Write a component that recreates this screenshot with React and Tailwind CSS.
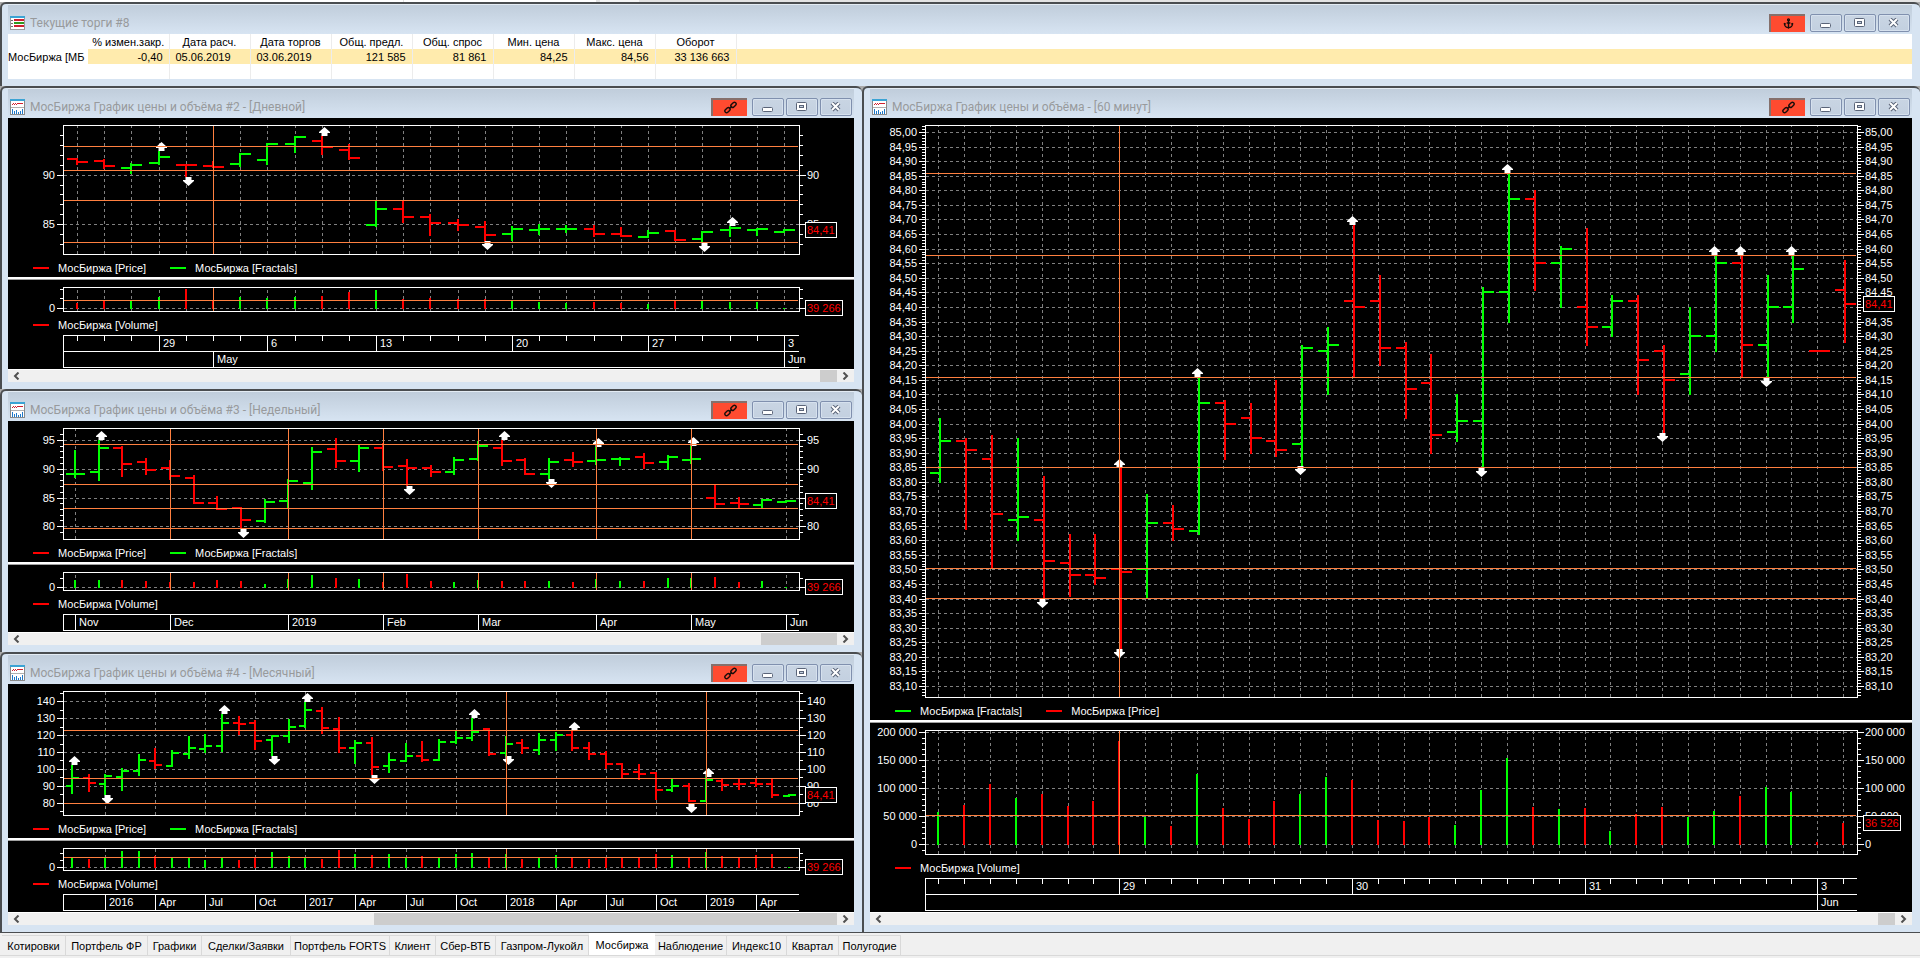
import { Anchor } from 'lucide-react'

const GREEN = '#00ff00'
const RED = '#ff0000'
const LEVEL = '#ff8040'
const GRID = '#808080'

const PLOT_LEFT = 55

const range = (from, to, step = 1) => {
  const out = []
  for (let v = from; v <= to; v += step) out.push(v)
  return out
}

// bars: [open, high, low, close, rising] as plot heights, volumes: bar tops
const DAILY = {
  title: 'МосБиржа График цены и объёма #2 - [Дневной]',
  width: 846,
  right: 791,
  x0: 69,
  step: 27.19,
  barShift: 0,
  arrowShift: 2.5,
  tick: [10, 11],
  dashed: range(0, 26),
  levelsX: [5],
  legend: [['МосБиржа [Price]', 'red'], ['МосБиржа [Fractals]', 'green']],
  thumb: 'w-[17px]',
  price: {
    height: 141,
    bottom: 136,
    majors: [[57, '90'], [106, '85']],
    minors: [17, 27, 37, 47, 67, 76, 86, 96, 116, 126],
    levels: [28, 52, 82, 124],
    badge: [104, '84,41', 32],
    bars: [
      [41, 40, 47, 44, 0], [43, 41, 51, 48, 0], [50, 45, 56, 47, 1], [45, 33, 47, 39, 1], [47, 46, 59, 47, 0],
      [48, 43, 50, 49, 0], [46, 35, 49, 36, 1], [42, 25, 47, 26, 1], [26, 18, 35, 19, 1], [23, 18, 37, 29, 0],
      [32, 26, 42, 40, 0], [107, 83, 109, 91, 1], [91, 82, 105, 99, 0], [99, 96, 118, 105, 0], [105, 101, 113, 107, 0],
      [109, 103, 123, 117, 0], [116, 108, 123, 111, 1], [112, 106, 117, 111, 1], [111, 107, 115, 111, 1], [111, 107, 119, 116, 0],
      [116, 109, 118, 118, 0], [119, 112, 120, 115, 1], [113, 112, 123, 122, 0], [121, 113, 124, 114, 1], [112, 108, 119, 110, 1],
      [112, 110, 118, 111, 1], [114, 111, 115, 112, 1]
    ],
    ups: [[3, 24], [9, 9], [24, 99]],
    downs: [[4, 59], [15, 123], [23, 125]]
  },
  volume: {
    height: 36,
    bottom: 31,
    base: 29,
    majors: [[28, '0']],
    minors: [9, 18],
    levels: [20],
    badge: [20, '39 266', 38],
    tops: [23, 21, 21, 17, 9, 21, 17, 18, 17, 16, 12, 10, 19, 18, 19, 19, 21, 22, 23, 22, 23, 24, 21, 21, 22, 22, 28]
  },
  axis: {
    ticks: range(0, 26),
    rows: [[[3, '29'], [7, '6'], [11, '13'], [16, '20'], [21, '27'], [26, '3']], [[5, 'May'], [26, 'Jun']]]
  }
}

const WEEKLY = {
  title: 'МосБиржа График цены и объёма #3 - [Недельный]',
  width: 846,
  right: 791,
  x0: 67,
  step: 23.7,
  barShift: 0,
  arrowShift: 2.5,
  tick: [9, 10],
  dashed: [0, 30],
  levelsX: [4, 9, 13, 17, 22, 26],
  legend: [['МосБиржа [Price]', 'red'], ['МосБиржа [Fractals]', 'green']],
  thumb: 'w-[76px]',
  price: {
    height: 123,
    bottom: 118,
    majors: [[19, '95'], [48, '90'], [77, '85'], [105, '80']],
    minors: [13, 25, 30, 36, 42, 53, 59, 65, 71, 82, 88, 94, 99, 111],
    levels: [23, 63, 87, 107],
    badge: [72, '84,41', 32],
    bars: [
      [53, 29, 57, 53, 1], [51, 19, 60, 27, 1], [27, 25, 56, 43, 0], [41, 37, 54, 49, 0], [47, 39, 59, 55, 0],
      [57, 54, 83, 82, 0], [82, 75, 89, 88, 0], [87, 86, 107, 99, 0], [100, 78, 102, 81, 1], [80, 58, 87, 60, 1],
      [62, 26, 69, 31, 1], [28, 17, 47, 40, 0], [40, 24, 51, 27, 1], [27, 22, 50, 46, 0], [45, 38, 65, 47, 0],
      [47, 44, 56, 51, 0], [51, 36, 54, 39, 1], [38, 20, 40, 25, 1], [27, 19, 45, 40, 0], [39, 37, 54, 53, 0],
      [53, 37, 58, 41, 1], [39, 31, 46, 41, 0], [40, 26, 44, 39, 1], [38, 36, 45, 38, 1], [36, 32, 48, 42, 0],
      [41, 34, 49, 36, 1], [39, 25, 43, 38, 1], [77, 63, 87, 83, 0], [82, 76, 87, 83, 0], [84, 78, 87, 79, 1],
      [81, 79, 82, 80, 1]
    ],
    ups: [[1, 10], [18, 10], [22, 17], [26, 16]],
    downs: [[7, 108], [14, 65], [20, 58]]
  },
  volume: {
    height: 30,
    bottom: 25,
    base: 23,
    majors: [[22, '0']],
    minors: [13],
    levels: [],
    badge: [14, '39 266', 38],
    tops: [15, 15, 15, 16, 17, 17, 15, 16, 19, 14, 10, 13, 14, 17, 9, 16, 17, 15, 16, 16, 16, 17, 14, 16, 16, 13, 13, 12, 17, 16, 22]
  },
  axis: {
    ticks: [],
    rows: [[[0, 'Nov'], [4, 'Dec'], [9, '2019'], [13, 'Feb'], [17, 'Mar'], [22, 'Apr'], [26, 'May'], [30, 'Jun']]]
  }
}

const MONTHLY = {
  title: 'МосБиржа График цены и объёма #4 - [Месячный]',
  width: 846,
  right: 791,
  x0: 63.9,
  step: 16.68,
  barShift: 0,
  arrowShift: 2.5,
  tick: [6, 7],
  dashed: [2, 5, 8, 11, 14, 17, 20, 23, 29, 32, 35, 41],
  levelsX: [26, 38],
  legend: [['МосБиржа [Price]', 'red'], ['МосБиржа [Fractals]', 'green']],
  thumb: 'w-[57%]',
  price: {
    height: 136,
    bottom: 131,
    majors: [[17, '140'], [34, '130'], [51, '120'], [68, '110'], [85, '100'], [102, '90'], [119, '80']],
    minors: [9, 26, 43, 60, 76, 93, 110, 127],
    levels: [46, 94, 119],
    badge: [103, '84,41', 32],
    bars: [
      [102, 81, 110, 94, 1], [94, 90, 108, 99, 0], [100, 90, 111, 92, 1], [93, 84, 107, 87, 1], [87, 70, 92, 76, 1],
      [77, 64, 85, 81, 0], [82, 66, 83, 69, 1], [70, 52, 75, 64, 1], [65, 50, 69, 62, 1], [62, 30, 68, 39, 1],
      [39, 32, 51, 40, 0], [39, 36, 66, 57, 0], [56, 52, 72, 52, 1], [52, 35, 59, 43, 1], [42, 18, 44, 26, 1],
      [27, 23, 50, 44, 0], [45, 33, 69, 64, 0], [64, 56, 80, 59, 1], [59, 53, 91, 83, 0], [82, 69, 89, 76, 1],
      [77, 59, 77, 72, 1], [72, 57, 78, 76, 0], [76, 55, 76, 58, 1], [58, 47, 60, 54, 1], [54, 34, 57, 48, 1],
      [45, 44, 72, 70, 0], [69, 52, 72, 60, 1], [59, 55, 70, 64, 0], [66, 49, 71, 56, 1], [56, 48, 67, 51, 1],
      [51, 46, 67, 64, 0], [64, 58, 76, 70, 0], [70, 67, 85, 80, 0], [80, 79, 94, 90, 0], [88, 80, 96, 90, 0],
      [89, 88, 116, 106, 0], [106, 95, 108, 102, 1], [102, 99, 118, 117, 0], [117, 93, 118, 96, 1], [97, 95, 107, 101, 0],
      [100, 95, 106, 100, 0], [99, 95, 103, 100, 0], [100, 95, 114, 111, 0], [112, 111, 112, 111, 1]
    ],
    ups: [[0, 72], [9, 21], [14, 9], [24, 25], [30, 38], [38, 84]],
    downs: [[2, 111], [12, 72], [18, 91], [26, 72], [37, 120]]
  },
  volume: {
    height: 34,
    bottom: 29,
    base: 27,
    majors: [[26, '0']],
    minors: [12, 19],
    levels: [16],
    badge: [18, '39 266', 38],
    tops: [
      16, 18, 16, 10, 10, 15, 16, 17, 19, 16, 19, 16, 11, 15, 16, 18, 9, 13, 14, 13, 16, 15,
      16, 13, 12, 16, 13, 18, 16, 14, 16, 18, 17, 16, 17, 13, 14, 16, 11, 15, 16, 14, 13, 26
    ]
  },
  axis: {
    ticks: [],
    rows: [[
      [2, '2016'], [5, 'Apr'], [8, 'Jul'], [11, 'Oct'], [14, '2017'], [17, 'Apr'], [20, 'Jul'],
      [23, 'Oct'], [26, '2018'], [29, 'Apr'], [32, 'Jul'], [35, 'Oct'], [38, '2019'], [41, 'Apr']
    ]]
  }
}

const HOURLY = {
  title: 'МосБиржа График цены и объёма - [60 минут]',
  width: 1042,
  right: 987,
  x0: 68.3,
  step: 25.85,
  barShift: 2,
  arrowShift: 0.5,
  tick: [10, 11],
  dashed: range(0, 35),
  levelsX: [7],
  legend: [['МосБиржа [Fractals]', 'green'], ['МосБиржа [Price]', 'red']],
  thumb: 'w-[17px]',
  price: {
    height: 584,
    bottom: 579,
    majors: range(0, 38).map(i => [Math.round(14 + i * 14.579), ((8500 - i * 5) / 100).toFixed(2).replace('.', ',')]),
    minors: range(-2, 193).map(i => Math.round(14 + i * 2.916)),
    levels: [55, 137, 259, 349, 450, 480],
    badge: [178, '84,41', 32],
    bars: [
      [355, 300, 365, 323, 1], [323, 320, 412, 332, 0], [341, 317, 451, 396, 0], [402, 320, 423, 399, 1], [402, 358, 480, 443, 0],
      [445, 416, 479, 457, 0], [457, 416, 467, 460, 0], [451, 349, 531, 454, 0], [451, 376, 480, 405, 1], [405, 387, 423, 411, 0],
      [413, 260, 417, 285, 1], [285, 282, 342, 306, 0], [300, 285, 336, 320, 0], [323, 262, 339, 332, 0], [326, 227, 348, 230, 1],
      [233, 209, 277, 227, 1], [183, 107, 259, 189, 0], [183, 157, 248, 230, 0], [230, 224, 301, 271, 0], [265, 236, 336, 317, 0],
      [314, 276, 324, 303, 1], [303, 169, 349, 174, 1], [174, 55, 205, 81, 1], [81, 72, 173, 145, 0], [145, 128, 190, 131, 1],
      [189, 110, 228, 209, 0], [209, 177, 219, 183, 1], [183, 177, 277, 242, 0], [233, 227, 315, 262, 0], [256, 189, 277, 218, 1],
      [218, 138, 234, 145, 1], [145, 137, 259, 227, 0], [227, 157, 259, 189, 1], [189, 138, 205, 151, 1], [233, 232, 234, 233, 0],
      [172, 142, 225, 186, 0]
    ],
    ups: [[7, 341], [10, 250], [16, 98], [22, 46], [30, 128], [31, 128], [33, 128]],
    downs: [[4, 481], [7, 531], [14, 348], [21, 350], [28, 315], [32, 260]]
  },
  volume: {
    height: 136,
    bottom: 131,
    base: 122,
    majors: [[9, '200 000'], [37, '150 000'], [65, '100 000'], [93, '50 000'], [121, '0']],
    minors: range(1, 21).map(i => Math.round(9 + i * 5.6)),
    levels: [92],
    badge: [92, '36 526', 38],
    tops: [
      89, 82, 61, 75, 71, 83, 78, 18, 94, 103, 51, 85, 96, 78, 71, 54, 57, 97,
      98, 94, 102, 67, 35, 84, 86, 85, 108, 91, 84, 94, 88, 73, 64, 69, 119, 100
    ]
  },
  axis: {
    ticks: range(0, 35),
    rows: [[[7, '29'], [16, '30'], [25, '31'], [34, '3']], [[34, 'Jun']]]
  }
}

const COLUMNS = [
  { name: '% измен.закр.', value: '-0,40', align: 'text-right' },
  { name: 'Дата расч.', value: '05.06.2019', align: 'text-left' },
  { name: 'Дата торгов', value: '03.06.2019', align: 'text-left' },
  { name: 'Общ. предл.', value: '121 585', align: 'text-right' },
  { name: 'Общ. спрос', value: '81 861', align: 'text-right' },
  { name: 'Мин. цена', value: '84,25', align: 'text-right' },
  { name: 'Макс. цена', value: '84,56', align: 'text-right' },
  { name: 'Оборот', value: '33 136 663', align: 'text-right' }
]

const TABS = [
  ['Котировки', 'w-16'],
  ['Портфель ФР', 'w-[82px]'],
  ['Графики', 'w-[54px]'],
  ['Сделки/Заявки', 'w-[89px]'],
  ['Портфель FORTS', 'w-[99px]'],
  ['Клиент', 'w-[46px]'],
  ['Сбер-ВТБ', 'w-[60px]'],
  ['Газпром-Лукойл', 'w-[93px]'],
  ['Мосбиржа', 'w-[66px]'],
  ['Наблюдение', 'w-[72px]'],
  ['Индекс10', 'w-[60px]'],
  ['Квартал', 'w-[52px]'],
  ['Полугодие', 'w-[62px]']
]

function ChartIcon() {
  return (
    <svg width="15" height="16" viewBox="0 0 15 16" shapeRendering="crispEdges" className="shrink-0">
      <rect x="0" y="0" width="15" height="16" fill="#8a8a8a" />
      <rect x="1" y="2" width="13" height="13" fill="#ffffff" />
      <rect x="0" y="0" width="15" height="2" fill="#3ba3d4" />
      <path d="M2 5h1v-1h1v1h1v-1h1v1h1v-1h6v1h-6v1h-1v-1h-1v1h-1v-1h-1v1h-1z" fill="#d02030" />
      <rect x="1" y="8" width="13" height="1" fill="#b0b0b0" />
      <path d="M2 10h1v5h-1zM4 12h1v3h-1zM6 11h1v4h-1zM8 13h1v2h-1zM10 12h1v3h-1zM12 10h1v5h-1z" fill="#1f78c8" />
    </svg>
  )
}

function TableIcon() {
  return (
    <svg width="15" height="14" viewBox="0 0 15 14" shapeRendering="crispEdges" className="shrink-0">
      <rect x="0" y="0" width="15" height="14" fill="#9a9a9a" />
      <rect x="1" y="2" width="13" height="11" fill="#ffffff" />
      <rect x="0" y="0" width="15" height="2" fill="#3ba3d4" />
      <path d="M1 4h2v1h-2zM1 7h2v1h-2zM1 10h2v1h-2z" fill="#707070" />
      <rect x="4" y="3" width="10" height="2" fill="#cf2030" />
      <rect x="4" y="6" width="10" height="2" fill="#2f9a20" />
      <rect x="4" y="9" width="10" height="2" fill="#cf2030" />
    </svg>
  )
}

function LinkIcon() {
  return (
    <svg width="13" height="13" viewBox="0 0 13 13" fill="none" stroke="#1a0d0a">
      <rect x="0.5" y="7.4" width="6" height="3.4" rx="1.7" transform="rotate(-45 3.5 9.1)" strokeWidth="1.4" />
      <rect x="6.5" y="2.2" width="6" height="3.4" rx="1.7" transform="rotate(-45 9.5 3.9)" strokeWidth="1.4" />
      <path d="M4.8 8.2L8.2 4.8" strokeWidth="1.2" />
    </svg>
  )
}

function WindowButton({ label, children }) {
  return (
    <button
      type="button"
      aria-label={label}
      className="flex h-[18px] w-8 items-center justify-center rounded-[2px] border border-[#8090ae] bg-linear-to-b from-[#c9d5e3] to-[#c3d0e0] shadow-[inset_0_0_0_1px_#d6e1ee]"
    >
      {children}
    </button>
  )
}

function TitleBar({ icon, title, pinned }) {
  return (
    <header className="flex h-[30px] items-center border-t border-[#e4ecf4] bg-linear-to-b from-[#c0cddb] to-[#d7e4f2] pt-1.5 pr-0.5 pl-0.5">
      {icon}
      <h2 className="ml-[5px] flex-1 truncate font-[Roboto,'Open_Sans',sans-serif] text-[12px] leading-4 text-[#989a9c]">{title}</h2>
      <button
        type="button"
        aria-label={pinned ? 'Закрепить' : 'Связать'}
        className="mr-[5px] flex h-[18px] w-9 items-center justify-center border-t-2 border-l-2 border-t-[#85706c] border-l-[#85706c] bg-[#ff4b30]"
      >
        {pinned ? <Anchor size={11} strokeWidth={3} color="#1a0d0a" /> : <LinkIcon />}
      </button>
      <div className="flex gap-0.5">
        <WindowButton label="Свернуть">
          <svg width="12" height="14" viewBox="0 0 12 14">
            <rect x="0.5" y="7.5" width="10" height="4" rx="1" fill="#ffffff" stroke="#5a6478" />
          </svg>
        </WindowButton>
        <WindowButton label="Развернуть">
          <svg width="12" height="10" viewBox="0 0 12 10">
            <rect x="0.5" y="0.5" width="10" height="8" rx="1" fill="#ffffff" stroke="#5a6478" />
            <rect x="3.5" y="3.5" width="4" height="2" fill="#c5d1e0" stroke="#5a6478" />
          </svg>
        </WindowButton>
        <WindowButton label="Закрыть">
          <svg width="12" height="10" viewBox="0 0 12 10">
            <path d="M2 1L9 8M9 1L2 8" stroke="#5a6478" strokeWidth="4" />
            <path d="M2 1L9 8M9 1L2 8" stroke="#ffffff" strokeWidth="2" />
          </svg>
        </WindowButton>
      </div>
    </header>
  )
}

function Window({ icon, title, pinned, children }) {
  return (
    <section className="flex flex-col overflow-hidden rounded-t-md border-t-2 border-l-2 border-[#4a4d50] bg-[#d7e4f2] pr-2 pb-[7px] pl-1.5">
      <TitleBar icon={icon} title={title} pinned={pinned} />
      {children}
    </section>
  )
}

function Scale({ chart, pane }) {
  const { right } = chart
  const badgeTop = pane.badge[0]
  // right-hand labels that sit fully behind the last-value badge are skipped
  const covered = y => y - 4 >= badgeTop && y + 4 <= badgeTop + 16

  return (
    <g>
      <g stroke="#ffffff" shapeRendering="crispEdges">
        {pane.minors.map(y => (
          <path key={y} d={`M${PLOT_LEFT - 3} ${y + 0.5}H${PLOT_LEFT}M${right} ${y + 0.5}H${right + 4}`} />
        ))}
        {pane.majors.map(([y]) => (
          <path key={y} d={`M${PLOT_LEFT - 6} ${y + 0.5}H${PLOT_LEFT}M${right} ${y + 0.5}H${right + 7}`} />
        ))}
        <rect x={PLOT_LEFT + 0.5} y="7.5" width={right - PLOT_LEFT} height={pane.bottom - 7} fill="none" />
      </g>
      {pane.majors.map(([y, label]) => (
        <g key={label} fill="#ffffff">
          <text x={PLOT_LEFT - 8} y={y + 4} textAnchor="end">{label}</text>
          {!covered(y) && <text x={right + 8} y={y + 4}>{label}</text>}
        </g>
      ))}
    </g>
  )
}

function Grid({ chart, pane, xs }) {
  return (
    <g stroke={GRID} strokeDasharray="3 3" shapeRendering="crispEdges">
      {pane.majors.map(([y]) => (
        <path key={y} d={`M${PLOT_LEFT + 1} ${y + 0.5}H${chart.right}`} />
      ))}
      {chart.dashed.map(i => (
        <path key={i} d={`M${xs(i) + 0.5} ${pane.bottom}V8`} />
      ))}
    </g>
  )
}

function Levels({ chart, pane, xs }) {
  return (
    <g stroke={LEVEL} shapeRendering="crispEdges">
      {pane.levels.map(y => (
        <path key={y} d={`M${PLOT_LEFT + 1} ${y + 0.5}H${chart.right - 1}`} />
      ))}
      {chart.levelsX.map(i => (
        <path key={i} d={`M${xs(i) + 0.5} 8V${pane.bottom}`} />
      ))}
    </g>
  )
}

function Badge({ x, badge }) {
  const [y, label, width] = badge
  return (
    <g>
      <rect x={x + 0.5} y={y + 0.5} width={width - 1} height="15" fill="#000000" stroke="#ffffff" shapeRendering="crispEdges" />
      <text x={x + 2} y={y + 12} fill="#ff0000">{label}</text>
    </g>
  )
}

function PricePlot({ chart, xs }) {
  const pane = chart.price
  const [tickLeft, tickRight] = chart.tick
  return (
    <svg viewBox={`0 0 ${chart.width} ${pane.height}`} className="block w-full text-[11px]" role="img" aria-label={chart.title}>
      <Grid chart={chart} pane={pane} xs={xs} />
      <g strokeWidth="2" shapeRendering="crispEdges">
        {pane.bars.map(([open, high, low, close, rising], i) => {
          const x = xs(i) + chart.barShift
          return (
            <path
              key={i}
              d={`M${x} ${high}V${low}M${x - tickLeft} ${open}H${x + 1}M${x - 1} ${close}H${x + tickRight}`}
              stroke={rising ? GREEN : RED}
            />
          )
        })}
      </g>
      <g fill="#ffffff">
        {pane.ups.map(([i, y]) => (
          <path key={i} transform={`translate(${xs(i) + chart.arrowShift} ${y})`} d="M0 0L5.5 5V6H3V9H-3V6H-5.5V5Z" />
        ))}
        {pane.downs.map(([i, y]) => (
          <path key={i} transform={`translate(${xs(i) + chart.arrowShift} ${y})`} d="M-3 0H3V3H5.5V4L0 9L-5.5 4V3H-3Z" />
        ))}
      </g>
      <Levels chart={chart} pane={pane} xs={xs} />
      <Scale chart={chart} pane={pane} />
      <Badge x={chart.right + 6} badge={pane.badge} />
    </svg>
  )
}

function VolumePlot({ chart, xs }) {
  const pane = chart.volume
  return (
    <svg viewBox={`0 0 ${chart.width} ${pane.height}`} className="block w-full text-[11px]" role="img" aria-label="Volume">
      <Grid chart={chart} pane={pane} xs={xs} />
      <g strokeWidth="2" shapeRendering="crispEdges">
        {pane.tops.map((top, i) => (
          <path key={i} d={`M${xs(i)} ${top}V${pane.base}`} stroke={chart.price.bars[i][4] ? GREEN : RED} />
        ))}
      </g>
      <Levels chart={chart} pane={pane} xs={xs} />
      <Scale chart={chart} pane={pane} />
      <Badge x={chart.right + 6} badge={pane.badge} />
    </svg>
  )
}

function TimeAxis({ chart, xs }) {
  const { rows, ticks } = chart.axis
  const height = rows.length * 16 + 3
  return (
    <svg viewBox={`0 0 ${chart.width} ${height}`} className="block w-full text-[11px]" aria-hidden="true">
      <g stroke="#ffffff" shapeRendering="crispEdges">
        <path d={`M${PLOT_LEFT + 0.5} 1V${height - 1}M${PLOT_LEFT} 1.5H${chart.right}`} />
        {ticks.map(i => <path key={i} d={`M${xs(i) + 0.5} 1V7`} />)}
        {rows.map((row, r) => (
          <g key={r}>
            <path d={`M${PLOT_LEFT} ${r * 16 + 17.5}H${chart.right}`} />
            {row.map(([i]) => <path key={i} d={`M${xs(i) + 0.5} ${r * 16 + 1}V${r * 16 + 17}`} />)}
          </g>
        ))}
      </g>
      {rows.map((row, r) => row.map(([i, label]) => (
        <text key={`${r}-${i}`} x={xs(i) + 4} y={r * 16 + 13} fill="#ffffff">{label}</text>
      )))}
    </svg>
  )
}

function Legend({ items }) {
  return (
    <ul className="flex h-[18px] items-center gap-6 pl-[25px] text-[11px] leading-[18px] text-white">
      {items.map(([label, color]) => (
        <li key={label} className="flex items-center gap-[9px]">
          <span className={color === 'red' ? 'h-0.5 w-4 bg-[#ff0000]' : 'h-0.5 w-4 bg-[#00ff00]'} />
          {label}
        </li>
      ))}
    </ul>
  )
}

function ScrollBar({ thumb }) {
  return (
    <div className="flex h-[13px] border-t border-white bg-[#f0f0f0]">
      <button type="button" aria-label="Прокрутить влево" className="flex w-[17px] items-center justify-center">
        <svg width="7" height="8" viewBox="0 0 7 8" fill="none" stroke="#505050" strokeWidth="2"><path d="M5.5 0.5L2 4L5.5 7.5" /></svg>
      </button>
      <div className="flex flex-1 justify-end">
        <div className={`h-full bg-[#cdcdcd] ${thumb}`} />
      </div>
      <button type="button" aria-label="Прокрутить вправо" className="flex w-[17px] items-center justify-center">
        <svg width="7" height="8" viewBox="0 0 7 8" fill="none" stroke="#505050" strokeWidth="2"><path d="M1.5 0.5L5 4L1.5 7.5" /></svg>
      </button>
    </div>
  )
}

function ChartWindow({ chart }) {
  const xs = i => Math.round(chart.x0 + chart.step * i)

  return (
    <Window icon={<ChartIcon />} title={chart.title}>
      <div className="flex-1 bg-black">
        <PricePlot chart={chart} xs={xs} />
        <Legend items={chart.legend} />
        <div className="h-[3px] border-b border-[#a0a0a0] bg-white" />
        <VolumePlot chart={chart} xs={xs} />
        <Legend items={[['МосБиржа [Volume]', 'red']]} />
        <TimeAxis chart={chart} xs={xs} />
      </div>
      <ScrollBar thumb={chart.thumb} />
    </Window>
  )
}

function QuotesTable() {
  return (
    <div className="bg-white">
      <table className="w-full table-fixed border-collapse text-[11px] leading-[13px] text-black">
        <thead>
          <tr className="h-[15px]">
            <th className="w-20 p-0" aria-label="Инструмент" />
            {COLUMNS.map(col => (
              <th key={col.name} className="w-[81px] overflow-hidden border-r border-[#ececec] px-0 pt-0.5 pb-0 text-center font-normal whitespace-nowrap">{col.name}</th>
            ))}
            <th className="p-0" aria-label="Пусто" />
          </tr>
        </thead>
        <tbody>
          <tr className="h-[15px] bg-[#ffebad]">
            <th scope="row" className="overflow-hidden bg-white px-0 pt-0.5 pb-0 text-left font-normal whitespace-nowrap">МосБиржа [МБ</th>
            {COLUMNS.map(col => (
              <td key={col.name} className={`border-r border-[#ececec] px-1.5 pt-0.5 pb-0 whitespace-nowrap ${col.align}`}>{col.value}</td>
            ))}
            <td className="p-0" />
          </tr>
          <tr className="h-[15px]">
            <td className="p-0" />
            {COLUMNS.map(col => <td key={col.name} className="border-r border-[#ececec] p-0" />)}
            <td className="p-0" />
          </tr>
        </tbody>
      </table>
    </div>
  )
}

function Tabs() {
  return (
    <nav className="flex h-[26px] flex-col border-t border-[#4a4d50] bg-[#f0f0f0]">
      <div className="flex h-[23px] items-end border-b border-[#d9d9d9] pl-0.5">
        {TABS.map(([name, width]) => (
          <button
            key={name}
            type="button"
            className={`${width} shrink-0 overflow-hidden text-center text-[11px] whitespace-nowrap text-black ${
              name === 'Мосбиржа' ? 'h-[22px] bg-white pt-0.5' : 'h-5 border-t border-r border-[#d9d9d9] pt-0.5'
            }`}
          >
            {name}
          </button>
        ))}
      </div>
    </nav>
  )
}

export default function App() {
  return (
    <div className="flex min-h-screen flex-col bg-[#ababab] font-['Liberation_Sans',Arial,sans-serif]">
      <div className="flex h-0.5 bg-[#e3e3e3]">
        <div className="w-[21%] bg-white" />
        <div className="ml-px w-[10%] bg-white" />
        <div className="ml-1 w-[2%] bg-[#f5f5f5]" />
      </div>
      <main className="flex flex-1 flex-col">
        <Window icon={<TableIcon />} title="Текущие торги #8" pinned>
          <QuotesTable />
        </Window>
        <div className="grid flex-1 grid-cols-[862fr_1058fr]">
          <div className="flex flex-col">
            <ChartWindow chart={DAILY} />
            <ChartWindow chart={WEEKLY} />
            <ChartWindow chart={MONTHLY} />
          </div>
          <ChartWindow chart={HOURLY} />
        </div>
      </main>
      <Tabs />
    </div>
  )
}
